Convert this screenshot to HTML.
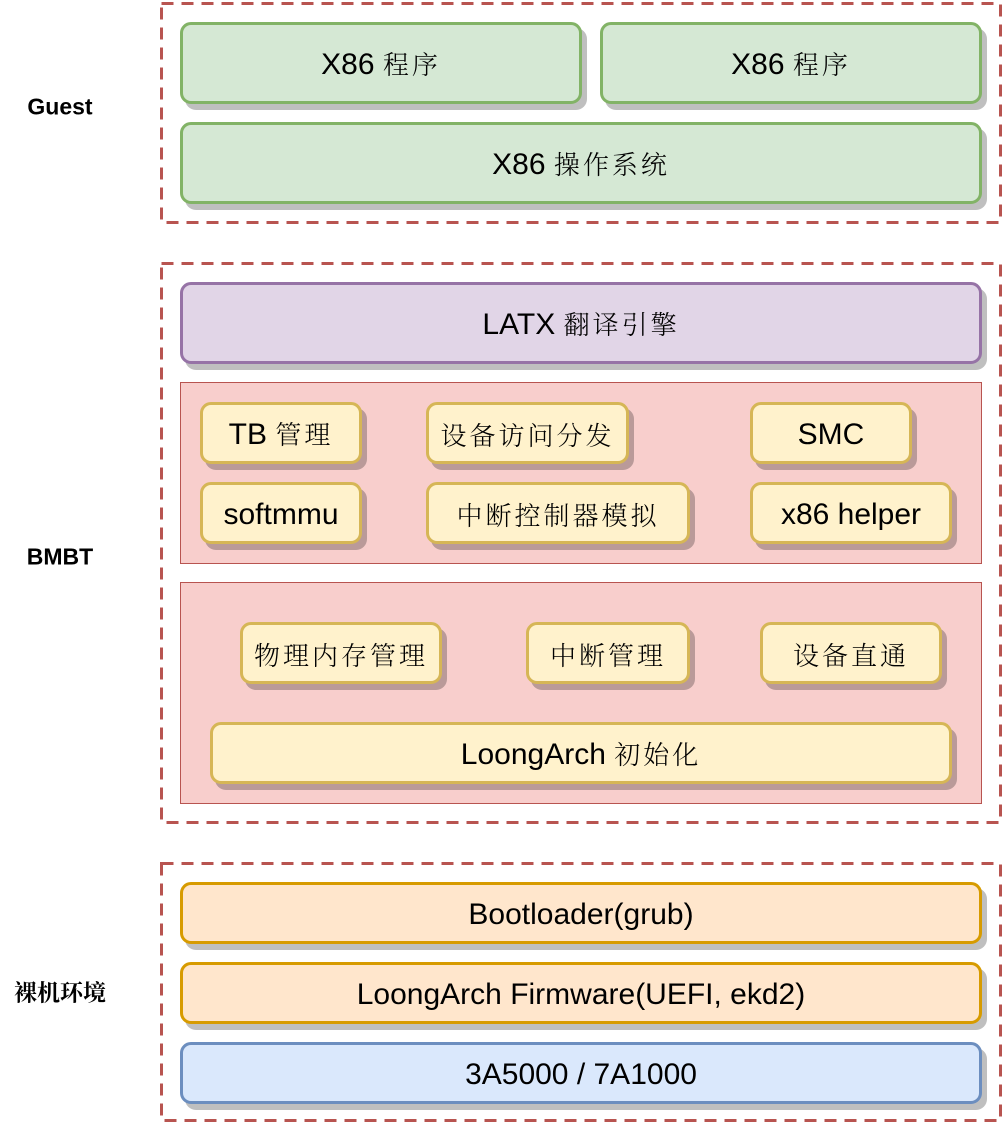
<!DOCTYPE html>
<html><head><meta charset="utf-8"><style>
body{margin:0;width:1004px;height:1124px;background:#fff;position:relative;overflow:hidden;font-family:"Liberation Sans","Noto Serif CJK SC",sans-serif;}
.b{position:absolute;box-sizing:border-box;border:3px solid;border-radius:11px;display:flex;align-items:center;justify-content:center;font-size:30px;color:#000;box-shadow:5px 6px 0 rgba(0,0,0,0.25);white-space:nowrap;padding-top:3px;}
.c{font-family:"Noto Serif CJK SC",serif;letter-spacing:3px;font-weight:300;font-size:26px;}
span.c{position:relative;top:-1px;}
.g{background:#d5e8d4;border-color:#82b366;}
.p{background:#e1d5e7;border-color:#9673a6;}
.y{background:#fff2cc;border-color:#d6b656;}
.o{background:#ffe6cc;border-color:#d79b00;}
.bl{background:#dae8fc;border-color:#6c8ebf;}
.r{position:absolute;background:#f8cecc;border:1.5px solid #b85450;box-sizing:border-box;}
.l{position:absolute;font-weight:bold;font-size:23px;transform:translate(-50%,-50%);white-space:nowrap;}
</style></head><body>
<svg width="1004" height="1124" style="position:absolute;left:0;top:0">
<g fill="none" stroke="#b85450" stroke-width="3" stroke-dasharray="12 8">
<rect x="161.5" y="3.5" width="839" height="219"/>
<rect x="161.5" y="263.5" width="839" height="559"/>
<rect x="161.5" y="863.5" width="839" height="257"/>
</g></svg>
<div class="l" style="left:60px;top:107px">Guest</div>
<div class="l" style="left:60px;top:557px">BMBT</div>
<div class="l" style="left:60px;top:991px;font-family:'Noto Serif CJK SC',serif">裸机环境</div>

<div class="b g" style="left:180px;top:22px;width:402px;height:82px">X86&nbsp;<span class="c">程序</span></div>
<div class="b g" style="left:600px;top:22px;width:382px;height:82px">X86&nbsp;<span class="c">程序</span></div>
<div class="b g" style="left:180px;top:122px;width:802px;height:82px">X86&nbsp;<span class="c">操作系统</span></div>

<div class="b p" style="left:180px;top:282px;width:802px;height:82px">LATX&nbsp;<span class="c">翻译引擎</span></div>

<div class="r" style="left:180px;top:382px;width:802px;height:182px"></div>
<div class="b y" style="left:200px;top:402px;width:162px;height:62px">TB&nbsp;<span class="c">管理</span></div>
<div class="b y c" style="left:426px;top:402px;width:203px;height:62px">设备访问分发</div>
<div class="b y" style="left:750px;top:402px;width:162px;height:62px">SMC</div>
<div class="b y" style="left:200px;top:482px;width:162px;height:62px">softmmu</div>
<div class="b y c" style="left:426px;top:482px;width:264px;height:62px">中断控制器模拟</div>
<div class="b y" style="left:750px;top:482px;width:202px;height:62px">x86 helper</div>

<div class="r" style="left:180px;top:582px;width:802px;height:222px"></div>
<div class="b y c" style="left:240px;top:622px;width:202px;height:62px">物理内存管理</div>
<div class="b y c" style="left:526px;top:622px;width:164px;height:62px">中断管理</div>
<div class="b y c" style="left:760px;top:622px;width:182px;height:62px">设备直通</div>
<div class="b y" style="left:210px;top:722px;width:742px;height:62px">LoongArch&nbsp;<span class="c">初始化</span></div>

<div class="b o" style="left:180px;top:882px;width:802px;height:62px">Bootloader(grub)</div>
<div class="b o" style="left:180px;top:962px;width:802px;height:62px">LoongArch Firmware(UEFI, ekd2)</div>
<div class="b bl" style="left:180px;top:1042px;width:802px;height:62px">3A5000 / 7A1000</div>
</body></html>
